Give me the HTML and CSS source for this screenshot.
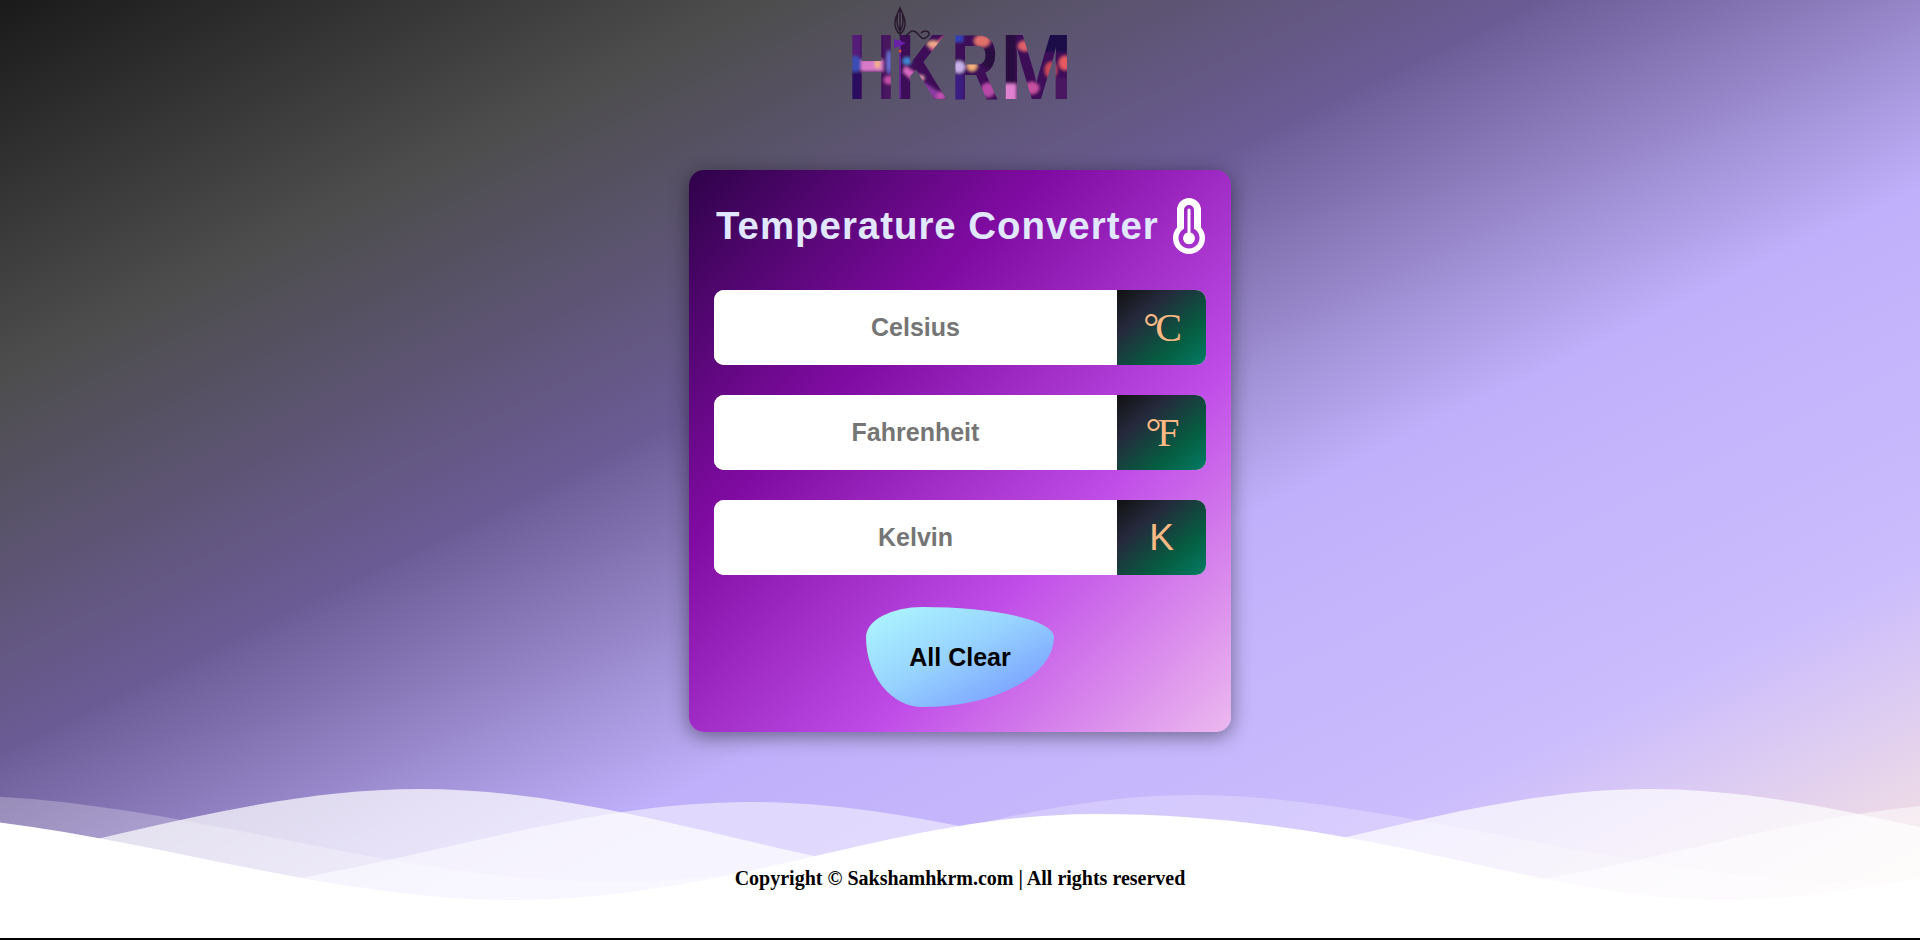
FILE: index.html
```html
<!DOCTYPE html>
<html lang="en">
<head>
<meta charset="utf-8">
<title>Temperature Converter</title>
<link rel="stylesheet" href="styles.css">
</head>
<body>
<div class="page">
  <svg class="waves" viewBox="0 0 1920 160" preserveAspectRatio="none" aria-hidden="true">
    <path class="wave-b" d="M-55 6C172 6 385 93 612 93S995 6 1193 6 1633 93 1860 93 2243 6 2441 6V160H-55Z"/>
    <path class="wave-c" d="M-210 96C4 96 206 0 420 0S829 96 1040 96 1443 0 1650 0 2066 96 2280 96V160H-210Z"/>
    <path class="wave-m" d="M130 106C341 106 539 13 750 13S1165 106 1378 106 1787 13 1998 13V160H130Z"/>
    <path class="wave-f" d="M-125 25C92 25 297 111 514 111S897 25 1095 25C1375 25 1535 111 1725 111S2139 25 2337 25V160H-125Z"/>
  </svg>
  <header class="brand">
    <svg class="logo" viewBox="0 -10 230 170" role="img" aria-label="HKRM logo">
      <defs>
        <mask id="letters" maskUnits="userSpaceOnUse" x="0" y="-10" width="230" height="170">
          <text class="logo-letter" transform="translate(3 89) scale(.71 1)">H</text>
          <text class="logo-letter" transform="translate(50 89) scale(.78 1)">K</text>
          <text class="logo-letter" transform="translate(106 89) scale(.72 1)">R</text>
          <text class="logo-letter" transform="translate(155 89) scale(.95 1)">M</text>
        </mask>
        <filter id="soft" x="0" y="0" width="1" height="1"><feGaussianBlur stdDeviation="1.4"/></filter>
      </defs>
      <g mask="url(#letters)">
        <g filter="url(#soft)">
          <rect x="-5" y="10" width="240" height="90" fill="#3d1059"/>
          <rect x="2" y="18" width="14" height="30" fill="#551a78"/>
          <ellipse cx="10" cy="54" rx="7" ry="8" fill="#3b4db5"/>
          <rect x="2" y="62" width="14" height="32" fill="#2a1060"/>
          <rect x="16" y="50" width="22" height="11" fill="#d87ac8"/>
          <rect x="30" y="49" width="5" height="9" fill="#f2b27e"/>
          <rect x="38" y="18" width="14" height="74" fill="#4a1260"/>
          <ellipse cx="44" cy="52" rx="2.5" ry="12" fill="#6a70d8"/>
          <ellipse cx="44" cy="70" rx="5" ry="4" fill="#c850a8"/>
          <path d="M84 38L102 24V34L90 42Z" fill="#d9608c"/>
          <ellipse cx="88" cy="34" rx="6" ry="3" fill="#f2ac88"/>
          <ellipse cx="62" cy="51" rx="4" ry="3.5" fill="#3f86d8"/>
          <path d="M60 56L78 68 72 74 58 62Z" fill="#d868c0"/>
          <ellipse cx="76" cy="68" rx="3" ry="2.5" fill="#f0a0c0"/>
          <path d="M78 72L100 86 94 92 74 80Z" fill="#8a3aa0"/>
          <ellipse cx="96" cy="86" rx="5" ry="4" fill="#c050b0"/>
          <rect x="106" y="20" width="12" height="12" fill="#3340b8"/>
          <ellipse cx="137" cy="31" rx="8" ry="6" fill="#e0706a"/>
          <ellipse cx="145" cy="48" rx="9" ry="12" fill="#2a0a40"/>
          <ellipse cx="114" cy="57" rx="6" ry="6" fill="#c8b0e8"/>
          <ellipse cx="127" cy="56" rx="5" ry="5" fill="#f4b07a"/>
          <rect x="106" y="64" width="13" height="28" fill="#3a1a80"/>
          <ellipse cx="143" cy="80" rx="7" ry="7" fill="#b84aa8"/>
          <rect x="156" y="74" width="15" height="18" fill="#e080d0"/>
          <rect x="156" y="18" width="15" height="54" fill="#2a0a40"/>
          <ellipse cx="180" cy="36" rx="7" ry="5" fill="#e0606a"/>
          <ellipse cx="187" cy="78" rx="7" ry="6" fill="#c850a0"/>
          <ellipse cx="206" cy="60" rx="6" ry="8" fill="#d04a58"/>
          <ellipse cx="220" cy="53" rx="6" ry="7" fill="#e85a60"/>
          <rect x="198" y="16" width="32" height="26" fill="#1e0a48"/>
          <rect x="210" y="68" width="20" height="26" fill="#4a1260"/>
        </g>
      </g>
      <path class="spear" d="M55 30V88"/>
      <g class="trident">
        <path d="M55 26V-2M55 -2C52 5 49 9 50 15 51 20 53 23 55 24 57 23 59 20 60 15 61 9 58 5 55 -2ZM52.5 5C51.5 11 52 17 55 21 58 17 58.5 11 57.5 5"/>
        <path d="M60 27C66 20 69 19 73 24S79 30 83 26 80 19 76 23"/>
      </g>
      <path class="sash" d="M49 29L61 33 55 36 49 38Z"/>
      <circle class="spear-dot" cx="55" cy="41" r="1.5"/>
    </svg>
  </header>
  <main class="converter">
    <div class="title-row">
      <h1 class="title">Temperature Converter</h1>
      <svg class="thermo" viewBox="0 0 32 56" aria-hidden="true">
        <path fill-rule="evenodd" d="M4 12a12 12 0 0 1 24 0V29.4A16 16 0 1 1 4 29.4ZM11 12V30.8A10.5 10.5 0 1 0 21 30.8V12a5 5 0 0 0-10 0Z"/>
        <path d="M14.5 12a1.5 1.5 0 0 1 3 0V34.5A6 6 0 1 1 14.5 34.5Z"/>
      </svg>
    </div>
    <div class="field">
      <input class="field-input" type="text" placeholder="Celsius">
      <span class="unit">°C</span>
    </div>
    <div class="field">
      <input class="field-input" type="text" placeholder="Fahrenheit">
      <span class="unit">°F</span>
    </div>
    <div class="field">
      <input class="field-input" type="text" placeholder="Kelvin">
      <span class="unit unit-k">K</span>
    </div>
    <div class="actions">
      <button class="clear" type="button">All Clear</button>
    </div>
  </main>
  <footer class="copyright">Copyright © Sakshamhkrm.com | All rights reserved</footer>
</div>
</body>
</html>
```
FILE: styles.css
```css
* { box-sizing: border-box; }
html, body { margin: 0; padding: 0; }
body { background: #fff; height: 940px; overflow: hidden; }
.page {
  position: relative;
  height: 940px;
  border-bottom: 2px solid #000;
  display: flex;
  flex-direction: column;
  align-items: center;
  overflow: hidden;
  background: linear-gradient(to bottom right, #1a1a1a 0%, #4d4d4d 20%, #6b5b95 40%, #c0b0fb 60%, #cbbcfd 80%, #ffeadc 100%);
}
.waves { position: absolute; left: 0; top: 789px; width: 1920px; height: 160px; }
.wave-b { fill: rgba(255,255,255,.25); }
.wave-c { fill: rgba(255,255,255,.7); }
.wave-m { fill: rgba(255,255,255,.5); }
.wave-f { fill: #fff; }
.brand { height: 170px; width: 100%; display: flex; justify-content: center; position: relative; }
.logo { width: 230px; height: 170px; }
.logo-letter { font-family: "Liberation Sans", sans-serif; font-weight: bold; font-size: 92px; fill: #fff; }
.trident { fill: none; stroke: #2a1a30; stroke-width: 1.5; }
.spear { stroke: #6a2aa0; stroke-width: 1.6; fill: none; }
.sash { fill: #6a20a8; }
.spear-dot { fill: #d84a3a; }
.converter {
  position: relative;
  width: 542px;
  height: 562px;
  padding: 28px 25px 25px;
  border-radius: 15px;
  background: linear-gradient(to bottom right, #2e0249 0%, #800ba2 33%, #c04ce8 67%, #ecb9ef 100%);
  box-shadow: 0 4px 20px rgba(0,0,0,.45);
}
.title-row { display: flex; justify-content: space-between; align-items: center; height: 56px; margin-bottom: 36px; padding-left: 2px; }
.title { margin: 0; font: bold 38.4px "Liberation Sans", sans-serif; letter-spacing: 1px; color: #e0e7ff; white-space: nowrap; }
.thermo { width: 32px; height: 56px; fill: #fff; margin-right: 1px; flex: none; }
.field { display: flex; height: 75px; margin-bottom: 30px; border-radius: 10px; overflow: hidden; background: #fff; }
.field-input { flex: 1; min-width: 0; border: 0; outline: 0; background: #fff; text-align: center; font: bold 25px "Liberation Sans", sans-serif; color: #333; }
.field-input::placeholder { color: #757575; opacity: 1; }
.unit {
  width: 89px; display: flex; align-items: center; justify-content: center;
  font: 40px "Liberation Serif", serif; letter-spacing: -4px; padding-right: 2px; color: #ffb985;
  background: linear-gradient(to bottom right, #111 0%, #25293c 30%, #055e41 70%, #047c66 100%);
}
.unit-k { font: 37px "Liberation Sans", sans-serif; letter-spacing: 0; padding-right: 0; }
.actions { display: flex; justify-content: center; margin-top: 32px; }
.clear {
  width: 188px; height: 100px; border: 0; padding: 0;
  border-radius: 30% 70% 70% 30% / 30% 30% 70% 70%;
  background: linear-gradient(to bottom right, #aef8ff 0%, #98d4ff 45%, #6f90ff 100%);
  font: bold 25px "Liberation Sans", sans-serif; color: #000;
}
.copyright {
  position: relative; margin-top: auto; padding-bottom: 48px;
  font: bold 20px "Liberation Serif", serif; color: #000;
}
```
